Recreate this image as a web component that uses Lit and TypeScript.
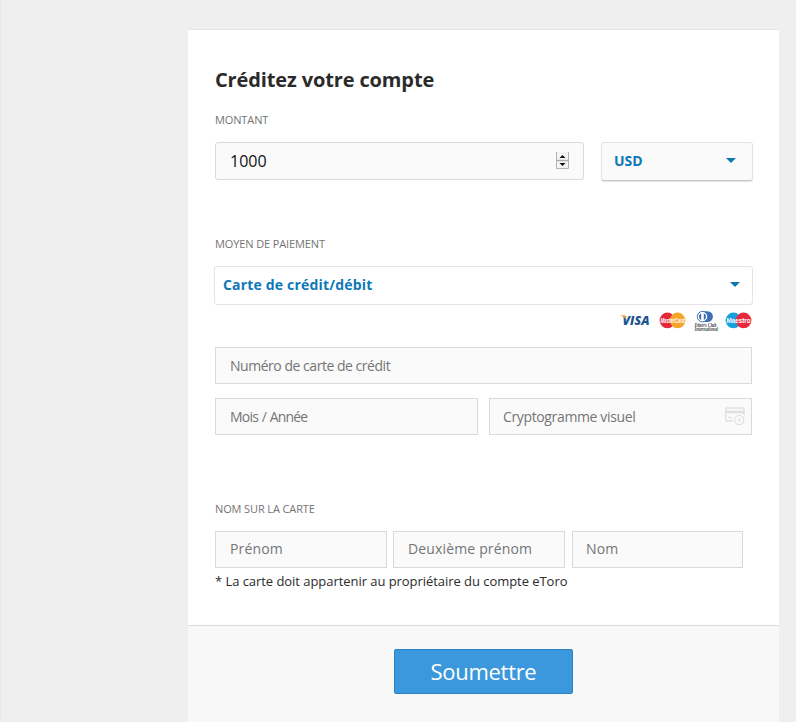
import { LitElement, html, css, svg } from "lit";
import { customElement } from "lit/decorators.js";

const caret = html`<svg class="caret" width="10" height="5" viewBox="0 0 10 5"><path d="M0 0H10L5 5Z" fill="#0d78b0" /></svg>`;

const spinner = html`<svg class="spinner" width="13" height="17" viewBox="0 0 13 17">
  <path d="M0 0V17H13V0Z" fill="#f4f4f4" />
  <path d="M.5 0V16.5H12.5V0" fill="none" stroke="#b4b4b4" />
  <path d="M0 8.5H13" stroke="#aaa" stroke-width="1.4" />
  <path d="M3.5 6L6.5 3L9.5 6ZM3.5 11L6.5 14L9.5 11Z" fill="#111" />
</svg>`;

const cvvIcon = html`<svg class="cvv" width="20" height="19" viewBox="0 0 20 19" fill="none" stroke="#e0e0e0">
  <path d="M8 14H1.8Q.8 14 .8 13V2Q.8 1 1.8 1H18Q19 1 19 2V8" stroke-width="1.5" />
  <path d="M1 5H19" stroke-width="2.6" />
  <path d="M3 10.5H7" stroke-width="1.2" />
  <circle cx="14.2" cy="13" r="4.6" stroke-width="1.2" />
  <path d="M14.2 11.4V14.6M12.6 13H15.8" />
</svg>`;

const visa = html`<svg width="31" height="22" viewBox="0 0 31 22">
  <text class="visa" x="2.5" y="14" textLength="27" lengthAdjust="spacingAndGlyphs">VISA</text>
  <path d="M.4 4.2H5.2L6.8 9Q4.6 5.8 .4 4.2Z" fill="#e0a63e" />
</svg>`;

const pair = (left: string, right: string, label: string, cls: string) => html`<svg width="27" height="22" viewBox="0 0 27 22">
  <circle cx="8.4" cy="9.4" r="7.8" fill=${left} />
  <circle cx="18.6" cy="9.4" r="7.8" fill=${right} />
  ${svg`<text class=${cls} x="1.4" y="11.8" textLength="24.2" lengthAdjust="spacingAndGlyphs">${label}</text>`}
</svg>`;

const diners = html`<svg width="26" height="22" viewBox="0 0 26 22">
  <path d="M10 .2H14.5A5.4 5.4 0 0 1 14.5 11H10Z" fill="#3f6fae" />
  <circle cx="9.5" cy="5.6" r="5.2" fill="#fff" stroke="#3f6fae" />
  <path d="M8.2 2.2A3.7 3.7 0 0 0 8.2 9ZM10.8 2.2A3.7 3.7 0 0 1 10.8 9Z" fill="#3f6fae" />
  <text class="diners" x="1.5" y="15.8" textLength="22" lengthAdjust="spacingAndGlyphs">Diners Club</text>
  <text class="diners" x="1.5" y="19.9" textLength="23.5" lengthAdjust="spacingAndGlyphs">International</text>
</svg>`;

@customElement("app-root")
export class AppRoot extends LitElement {
  static styles = css`
    :host {
      display: block;
      box-sizing: border-box;
      height: 722px;
      padding: 29px 17px 0 187px;
      border-left: 1px solid #e8e8e8;
      background: #efefef;
      font-family: "Open Sans", sans-serif;
      color: #2b2b2b;
      overflow: hidden;
    }
    * { box-sizing: border-box; }
    svg { display: block; flex: none; overflow: visible; }
    .panel {
      height: 693px;
      display: flex;
      flex-direction: column;
      background: #fff;
      border-top: 1px solid #e4e4e4;
    }
    .body { height: 595px; padding: 35px 26px 0 27px; }
    h1 { margin: 0; font-size: 20px; line-height: 30px; font-weight: 700; white-space: nowrap; letter-spacing: -0.13px; }
    .label { font-size: 11px; line-height: 16px; color: #747474; white-space: nowrap; letter-spacing: -0.12px; }
    .amount-label { margin-top: 17px; }
    .row { display: flex; }
    .field {
      display: flex;
      align-items: center;
      height: 37px;
      padding: 0 14px;
      border: 1px solid #dadada;
      background: #fafafa;
      color: #757575;
      font-size: 14px;
      white-space: nowrap;
    }
    .amount-row { margin-top: 14px; gap: 17px; }
    .amount {
      width: 369px;
      height: 38px;
      border-radius: 3px;
      color: #111;
      font-size: 16px;
      justify-content: space-between;
    }
    .spinner { margin-top: -1px; }
    .select {
      display: flex;
      align-items: center;
      justify-content: space-between;
      border: 1px solid #e4e4e4;
      border-radius: 3px;
      color: #0d78b8;
      font-size: 14px;
      font-weight: 700;
    }
    .currency {
      width: 152px;
      height: 39px;
      padding: 0 16px 3px 12px;
      background: #fafafa;
      border-bottom-color: #c8c8c8;
      box-shadow: 0 1px 1px #e2e2e2;
    }
    .method-label { margin-top: 55px; }
    .method { width: 539px; height: 39px; margin: 14px 0 0 -1px; padding: 0 12px 3px 8px; letter-spacing: 0.18px; }
    .brands { display: flex; justify-content: flex-end; height: 22px; margin-top: 6px; padding-right: 1px; }
    .brands svg + svg { margin-left: 8px; }
    .brands svg:nth-child(3) { margin-left: 7px; }
    .brands svg:nth-child(4) { margin-left: 6px; }
    .visa { font: italic 800 13px "Open Sans", sans-serif; fill: #1d5590; }
    .mc { font: italic 700 7px "Liberation Sans", sans-serif; fill: #fff; }
    .maestro { font: 700 7px "Liberation Sans", sans-serif; fill: #fff; }
    .diners { font: italic 700 5.5px "Liberation Serif", serif; fill: #444; }
    .number { width: 537px; margin-top: 14px; padding-bottom: 1px; }
    .pair { width: 537px; margin-top: 14px; gap: 11px; }
    .half { flex: 0 0 263px; }
    .number span { letter-spacing: -0.47px; }
    .expiry span { letter-spacing: -0.8px; word-spacing: 0.8px; }
    .code span { letter-spacing: -0.36px; }
    .code { justify-content: space-between; padding: 0 6px 0 13px; }
    .cvv { margin-top: -1px; }
    .name-label { margin-top: 66px; }
    .names { margin-top: 14px; gap: 6px; }
    .names .field { padding-bottom: 2px; letter-spacing: 0.15px; }
    .first, .middle { width: 172px; }
    .last { width: 171px; margin-left: 1px; padding-left: 13px; }
    .note { margin-top: 4px; font-size: 13px; line-height: 19px; white-space: nowrap; letter-spacing: -0.05px; }
    .footer {
      flex: 1;
      display: flex;
      justify-content: center;
      align-items: flex-start;
      padding-top: 23px;
      background: #f8f8f8;
      border-top: 1px solid #dcdcdc;
    }
    button {
      width: 179px;
      height: 45px;
      padding: 0 0 1px;
      border: 1px solid #2c83c1;
      border-radius: 2px;
      background: #3c98dc;
      color: #fff;
      font: 22px "Open Sans", sans-serif;
      letter-spacing: -0.3px;
    }
  `;

  render() {
    return html`
      <main class="panel">
        <section class="body">
          <h1><span>Créditez votre compte</span></h1>
          <div class="label amount-label">MONTANT</div>
          <div class="row amount-row">
            <div class="field amount"><span>1000</span>${spinner}</div>
            <div class="select currency"><span>USD</span>${caret}</div>
          </div>
          <div class="label method-label">MOYEN DE PAIEMENT</div>
          <div class="select method"><span>Carte de crédit/débit</span>${caret}</div>
          <div class="brands">
            ${visa}
            ${pair("#e2283a", "#f5a52c", "MasterCard", "mc")}
            ${diners}
            ${pair("#179edc", "#e8283c", "Maestro", "maestro")}
          </div>
          <div class="field number"><span>Numéro de carte de crédit</span></div>
          <div class="row pair">
            <div class="field half expiry"><span>Mois / Année</span></div>
            <div class="field half code"><span>Cryptogramme visuel</span>${cvvIcon}</div>
          </div>
          <div class="label name-label">NOM SUR LA CARTE</div>
          <div class="row names">
            <div class="field first"><span>Prénom</span></div>
            <div class="field middle"><span>Deuxième prénom</span></div>
            <div class="field last"><span>Nom</span></div>
          </div>
          <div class="note">* La carte doit appartenir au propriétaire du compte eToro</div>
        </section>
        <footer class="footer"><button>Soumettre</button></footer>
      </main>
    `;
  }
}
